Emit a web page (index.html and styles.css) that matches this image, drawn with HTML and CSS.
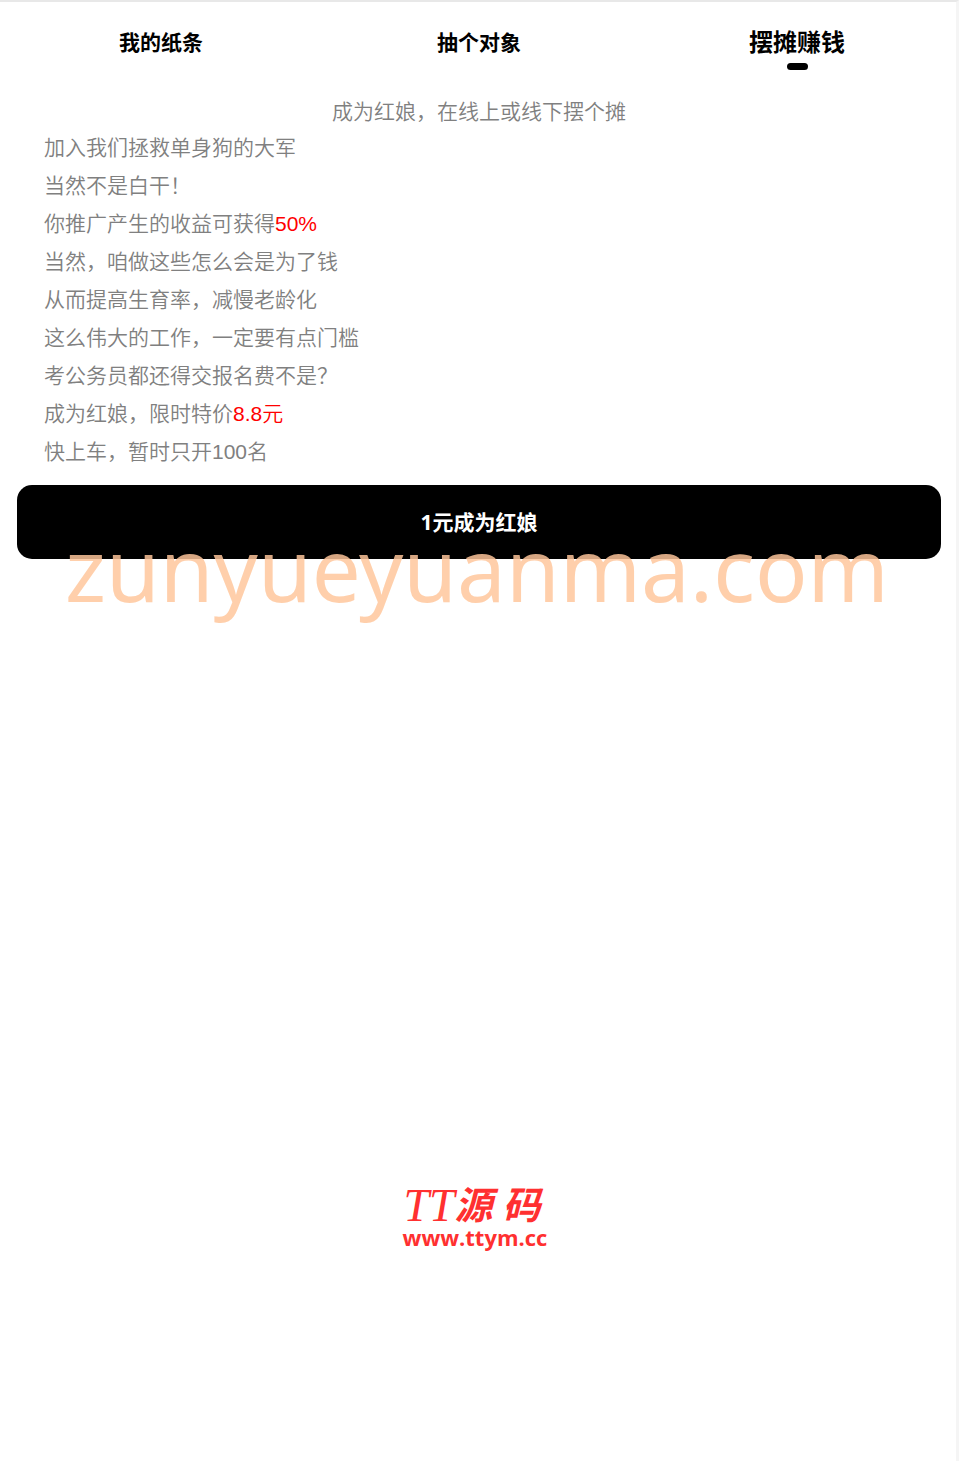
FILE: index.html
```html
<!DOCTYPE html>
<html lang="zh-CN">
<head>
<meta charset="utf-8">
<meta name="viewport" content="width=device-width, initial-scale=1">
<title>摆摊赚钱</title>
<link rel="stylesheet" href="styles.css">
</head>
<body>
<div class="page">
  <nav class="tabs">
    <a class="tab" href="#notes">我的纸条</a>
    <a class="tab" href="#draw">抽个对象</a>
    <a class="tab tab-active" href="#earn" aria-current="page">摆摊赚钱</a>
  </nav>
  <main class="content">
    <h1 class="title">成为红娘，在线上或线下摆个摊</h1>
    <div class="intro">
      <p>加入我们拯救单身狗的大军</p>
      <p>当然不是白干！</p>
      <p>你推广产生的收益可获得<span class="hot">50%</span></p>
      <p>当然，咱做这些怎么会是为了钱</p>
      <p>从而提高生育率，减慢老龄化</p>
      <p>这么伟大的工作，一定要有点门槛</p>
      <p>考公务员都还得交报名费不是？</p>
      <p>成为红娘，限时特价<span class="hot">8.8元</span></p>
      <p>快上车，暂时只开100名</p>
    </div>
    <div class="action">
      <button class="join" type="button">1元成为红娘</button>
      <div class="watermark">zunyueyuanma.com</div>
    </div>
  </main>
  <footer class="brand">
    <div class="brand-name"><span class="brand-latin">TT</span><span class="brand-han">源</span><span class="brand-han">码</span></div>
    <div class="brand-url">www.ttym.cc</div>
  </footer>
</div>
</body>
</html>
```
FILE: styles.css
```css
* {
  box-sizing: border-box;
}

body {
  margin: 0;
  background: #fff;
  color: #808080;
  font-family: "Liberation Sans", "Noto Sans CJK SC", sans-serif;
  font-size: 21px;
}

.page {
  display: flex;
  flex-direction: column;
  min-height: 100vh;
  border-top: 2px solid #e8e8e8;
  border-right: 3px solid #f5f5f5;
}

.tabs {
  display: grid;
  grid-template-columns: repeat(3, 1fr);
  padding: 21px 0 0 2px;
}

.tab {
  display: flex;
  flex-direction: column;
  align-items: center;
  height: 48px;
  color: #000;
  font-weight: 700;
  line-height: 40px;
  text-decoration: none;
}

.tab-active {
  font-size: 24px;
}

.tab-active::after {
  content: "";
  width: 21px;
  height: 7px;
  border-radius: 4px;
  background: #000;
}

.content {
  padding: 24px 15px 0 17px;
}

.title {
  margin: 0;
  font-size: 21px;
  font-weight: 350;
  line-height: 34px;
  text-align: center;
}

.intro {
  padding: 0 27px;
  font-weight: 350;
  line-height: 38px;
}

.intro p {
  margin: 0;
}

.hot {
  color: #f00;
}

.action {
  position: relative;
  padding-top: 14px;
}

.join {
  display: block;
  width: 100%;
  height: 74px;
  padding: 0 0 2px;
  border: 0;
  border-radius: 15px;
  background: #000;
  color: #fff;
  font-family: "Noto Sans", "Noto Sans CJK SC", sans-serif;
  font-size: 21px;
  font-weight: 700;
}

.watermark {
  position: absolute;
  top: 47px;
  left: 0;
  right: 4px;
  color: rgba(255, 198, 155, 0.84);
  font-family: "Noto Sans", sans-serif;
  font-size: 87px;
  line-height: 100px;
  text-align: center;
  pointer-events: none;
}

.brand {
  display: flex;
  flex-direction: column;
  align-items: center;
  margin-top: auto;
  padding: 0 6px 212px 0;
  color: #ff3030;
}

.brand-name {
  display: flex;
  align-items: center;
  padding: 2px 6px 0 0;
  font-size: 38px;
  font-style: italic;
  font-weight: 700;
  line-height: 38px;
}

.brand-latin {
  font-family: "Liberation Serif", serif;
  font-size: 46px;
  font-weight: 400;
}

.brand-han + .brand-han {
  margin-left: 10px;
}

.brand-url {
  font-family: "Open Sans", sans-serif;
  font-size: 22px;
  font-weight: 700;
  line-height: 24px;
}
```
